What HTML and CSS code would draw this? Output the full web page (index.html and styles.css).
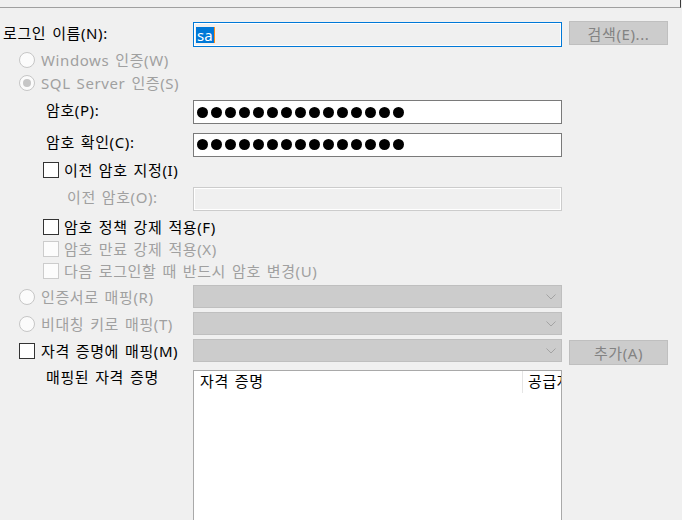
FILE: index.html
```html
<!DOCTYPE html>
<html lang="ko">
<head>
  <meta charset="UTF-8" />
  <title>로그인 - 일반</title>
  <link rel="stylesheet" href="styles.css">
</head>
<body>
  <div class="topline"></div>

  <div class="form">
    <!-- login name -->
    <div class="row r1">
      <label class="lbl">로그인 이름(N):</label>
      <div class="field focus"><span class="sel">sa</span></div>
      <button class="btn top">검색(E)...</button>
    </div>

    <!-- auth mode -->
    <div class="row r2">
      <div class="opt wide off"><span class="radio"></span>Windows 인증(W)</div>
    </div>
    <div class="row r3">
      <div class="opt wide off"><span class="radio on"></span>SQL Server 인증(S)</div>
    </div>

    <div class="row r4">
      <label class="lbl in46">암호(P):</label>
      <div class="field pw">
        <span class="dot"></span><span class="dot"></span><span class="dot"></span><span class="dot"></span><span class="dot"></span>
        <span class="dot"></span><span class="dot"></span><span class="dot"></span><span class="dot"></span><span class="dot"></span>
        <span class="dot"></span><span class="dot"></span><span class="dot"></span><span class="dot"></span><span class="dot"></span>
      </div>
    </div>
    <div class="row r5">
      <label class="lbl in46">암호 확인(C):</label>
      <div class="field pw">
        <span class="dot"></span><span class="dot"></span><span class="dot"></span><span class="dot"></span><span class="dot"></span>
        <span class="dot"></span><span class="dot"></span><span class="dot"></span><span class="dot"></span><span class="dot"></span>
        <span class="dot"></span><span class="dot"></span><span class="dot"></span><span class="dot"></span><span class="dot"></span>
      </div>
    </div>

    <div class="row r6">
      <div class="opt wide ind"><span class="check"></span>이전 암호 지정(I)</div>
    </div>
    <div class="row r7">
      <label class="lbl in67 off">이전 암호(O):</label>
      <div class="field disabled"></div>
    </div>

    <!-- policy -->
    <div class="row r8">
      <div class="opt wide ind"><span class="check"></span>암호 정책 강제 적용(F)</div>
    </div>
    <div class="row r9">
      <div class="opt wide ind off"><span class="check"></span>암호 만료 강제 적용(X)</div>
    </div>
    <div class="row r10">
      <div class="opt wide ind off"><span class="check"></span>다음 로그인할 때 반드시 암호 변경(U)</div>
    </div>

    <!-- mapping -->
    <div class="row r11">
      <div class="opt off"><span class="radio"></span>인증서로 매핑(R)</div>
      <div class="combo"><svg width="10" height="6" viewBox="0 0 10 6"><polyline points="0.5,0.5 5,5 9.5,0.5" fill="none" stroke="#a3a3a3" stroke-width="1"/></svg></div>
    </div>
    <div class="row r12">
      <div class="opt off"><span class="radio"></span>비대칭 키로 매핑(T)</div>
      <div class="combo"><svg width="10" height="6" viewBox="0 0 10 6"><polyline points="0.5,0.5 5,5 9.5,0.5" fill="none" stroke="#a3a3a3" stroke-width="1"/></svg></div>
    </div>
    <div class="row r13">
      <div class="opt"><span class="check"></span>자격 증명에 매핑(M)</div>
      <div class="combo"><svg width="10" height="6" viewBox="0 0 10 6"><polyline points="0.5,0.5 5,5 9.5,0.5" fill="none" stroke="#a3a3a3" stroke-width="1"/></svg></div>
      <button class="btn low">추가(A)</button>
    </div>

    <div class="row r14">
      <label class="lbl in46 top">매핑된 자격 증명</label>
      <div class="list">
        <div class="list-head">
          <div class="col c1">자격 증명</div>
          <div class="col c2">공급자</div>
        </div>
      </div>
    </div>
  </div>
</body>
</html>
```

FILE: styles.css
```css
body {
  margin: 0;
  width: 682px;
  height: 520px;
  overflow: hidden;
  background: #f0f0f0;
  font-family: "Noto Sans", "Noto Sans CJK KR", sans-serif;
  font-size: 15px;
  letter-spacing: 0.6px;
  word-spacing: 1.5px;
  color: #000;
}

/* edge of the panel above */
.topline {
  height: 7px;
  border-bottom: 1px solid #a0a0a0;
  border-right: 1px solid #3a3a3a;
  width: 680px;
}

.form {
  padding-top: 13px;
}

.row {
  display: grid;
  grid-template-columns: 186px 369px 99px;
  column-gap: 7px;
  align-items: center;
}

.r1 { height: 26px; }
.r2 { height: 25px; }
.r3 { height: 22px; }
.r4 { height: 36px; }
.r5 { height: 29px; }
.r6 { height: 22px; }
.r7 { height: 36px; }
.r8 { height: 20px; }
.r9 { height: 23px; }
.r10 { height: 21px; }
.r11 { height: 31px; }
.r12 { height: 22px; }
.r13 { height: 33px; margin-bottom: 3px; }
.r14 { align-items: start; }

.lbl {
  padding-left: 3px;
  padding-bottom: 5px;
  line-height: 18px;
  white-space: nowrap;
}

.r1 .lbl { padding-bottom: 2px; }
.lbl.in46 { padding-left: 46px; }
.lbl.in67 { padding-left: 67px; }
.lbl.top { margin-top: -2px; padding-bottom: 0; }

.off { color: #a0a0a0; }

/* radio buttons and check boxes */
.opt {
  display: flex;
  align-items: center;
  padding-left: 19px;
  line-height: 18px;
  white-space: nowrap;
}

.opt.wide { grid-column: 1 / -1; }
.opt.ind { padding-left: 43px; }

.radio {
  width: 14px;
  height: 14px;
  border: 1px solid #333;
  border-radius: 50%;
  background: #fff;
  margin-right: 6px;
  display: flex;
  justify-content: center;
  align-items: center;
  flex: none;
}

.off .radio {
  border-color: #c6c6c6;
  background: #fbfbfb;
}

.radio.on::after {
  content: "";
  width: 8px;
  height: 8px;
  border-radius: 50%;
  background: #c6c6c6;
}

.check {
  width: 14px;
  height: 14px;
  border: 1px solid #333;
  background: #fff;
  margin-right: 6px;
  flex: none;
}

.ind .check { margin-right: 5px; }

.off .check {
  border-color: #cccccc;
  background: #fcfcfc;
}

/* text boxes */
.field {
  height: 23px;
  border: 1px solid #7a7a7a;
  background: #fff;
  display: flex;
  align-items: center;
  padding-left: 2px;
}

.field.focus {
  height: 23px;
  border-color: #0078d7;
  background: #f0f0f0;
  box-shadow: inset 0 0 0 1px #fff;
  align-self: end;
}

.sel {
  background: #0078d7;
  color: #fff;
  height: 16px;
  line-height: 16px;
  padding: 0 1px;
  letter-spacing: 0;
  border-right: 1px solid #ff8c1a;
}

.field.pw {
  height: 22px;
  padding-left: 3px;
  gap: 3px;
}

.dot {
  width: 11px;
  height: 11px;
  border-radius: 50%;
  background: #000;
}

.field.disabled {
  height: 22px;
  border-color: #cccccc;
  background: #f0f0f0;
  box-shadow: inset 0 0 0 1px #fff;
}

/* combo boxes */
.combo {
  height: 21px;
  border: 1px solid #bfbfbf;
  background: #cccccc;
  display: flex;
  align-items: center;
  justify-content: flex-end;
  padding-right: 5px;
}

/* buttons */
.btn {
  height: 24px;
  border: 1px solid #bfbfbf;
  background: #cccccc;
  color: #838383;
  font-family: inherit;
  font-size: 15px;
  letter-spacing: 0.6px;
  padding: 0;
  margin: 0;
}

.btn.top { align-self: start; }
.btn.low { height: 25px; align-self: start; margin-top: 6px; }

/* mapped credentials list */
.list {
  height: 170px;
  border: 1px solid #a9a9a9;
  background: #fff;
}

.list-head {
  display: flex;
  height: 22px;
  overflow: hidden;
}

.col {
  line-height: 20px;
  padding-left: 6px;
  white-space: nowrap;
}

.c1 {
  flex: none;
  width: 322px;
  border-right: 1px solid #e5e5e5;
}

.c2 {
  padding-left: 5px;
}
```
